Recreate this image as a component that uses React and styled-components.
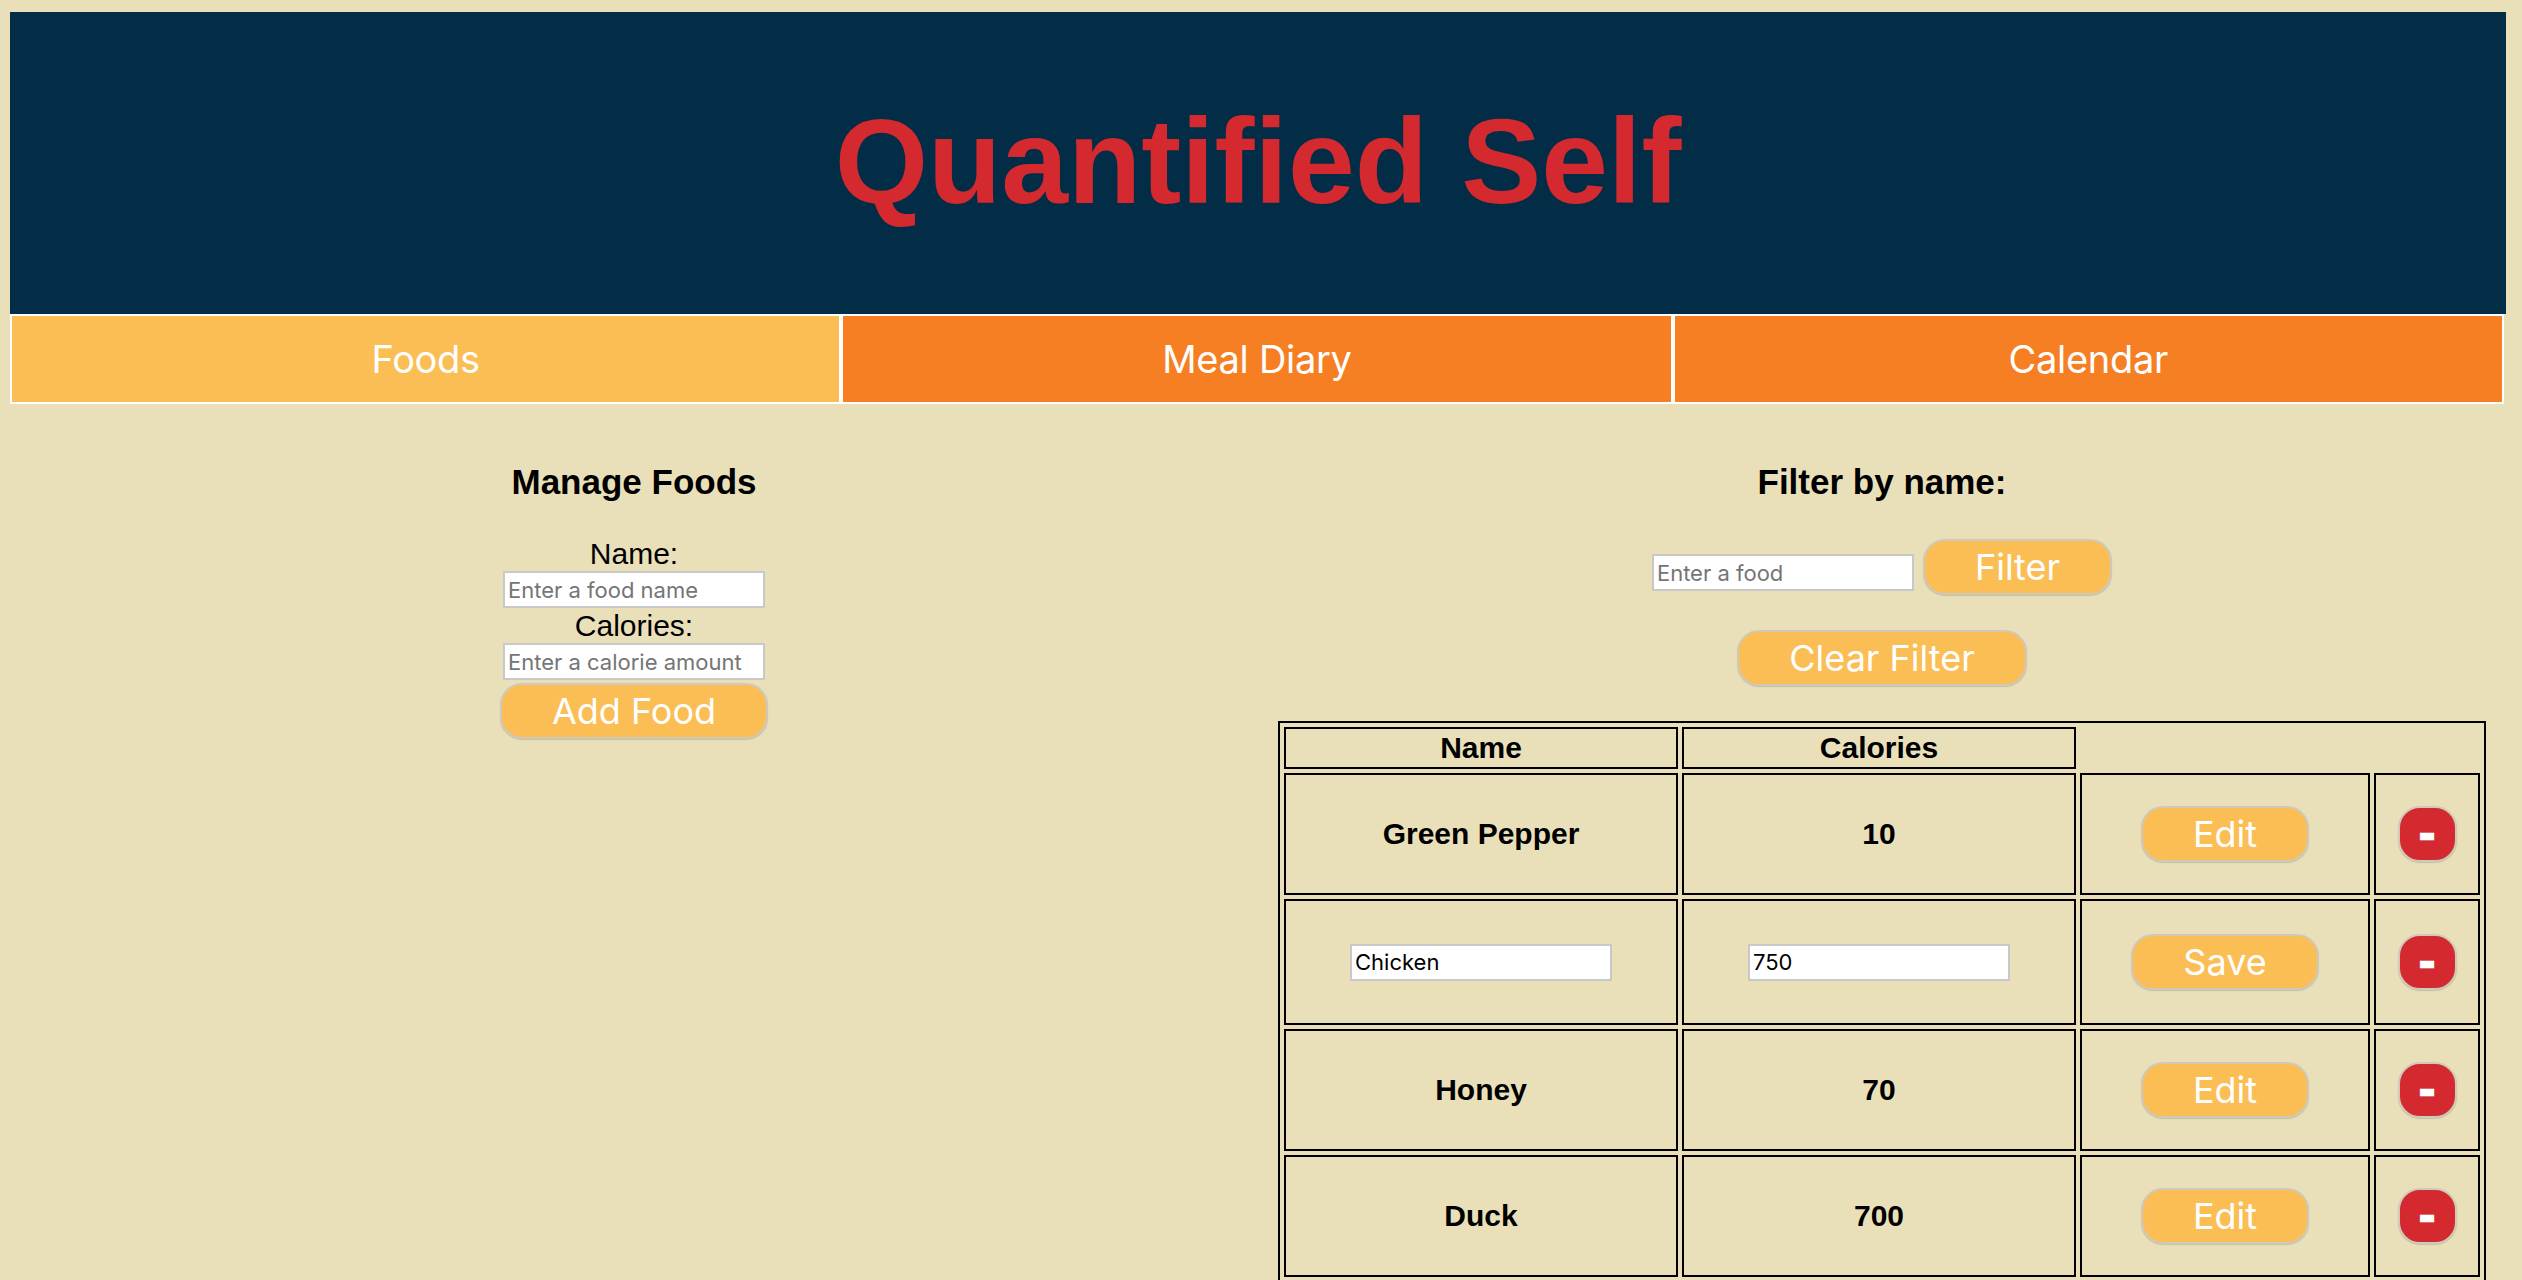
import React from "react";
import styled, { createGlobalStyle } from "styled-components";

const GlobalStyle = createGlobalStyle`
  html, body {
    margin: 0;
    padding: 0;
    background: #e9e0b9;
  }
  body {
    font-family: "Liberation Sans", Arial, sans-serif;
    font-size: 30px;
    color: #000;
  }
`;

const Page = styled.div`
  padding: 12px 16px 0 10px;
  min-height: 100vh;
  box-sizing: border-box;
`;

const Header = styled.header`
  height: 302px;
  box-sizing: border-box;
  padding-bottom: 4px;
  background: #032d47;
  display: flex;
  align-items: center;
  justify-content: center;
`;

const Title = styled.h1`
  margin: 0;
  font-family: "Liberation Sans", Arial, sans-serif;
  font-weight: bold;
  font-size: 120px;
  line-height: 1;
  color: #d3292f;
`;

const Nav = styled.nav`
  display: flex;
  width: calc(100% - 2px);
`;

const NavButton = styled.button`
  flex: 1;
  height: 90px;
  margin: 0;
  padding: 0;
  border: 2px solid #fff;
  background: ${(p) => (p.$active ? "#fbbe55" : "#f67f24")};
  color: #fff;
  font-family: Inter, "Noto Sans", sans-serif;
  font-size: 38px;
  letter-spacing: -0.3px;
  cursor: pointer;
`;

const Columns = styled.main`
  display: grid;
  grid-template-columns: 1fr 1fr;
`;

const Column = styled.section`
  display: flex;
  flex-direction: column;
  align-items: center;
  padding-top: 58px;
`;

const SectionTitle = styled.h3`
  margin: 0;
  font-size: 35px;
  font-weight: bold;
  line-height: 40px;
`;

const FoodForm = styled.form`
  display: flex;
  flex-direction: column;
  align-items: center;
  margin-top: 34px;
`;

const FieldLabel = styled.label`
  display: block;
  font-size: 30px;
  line-height: ${(p) => (p.$tight ? "34px" : "35px")};
  margin-top: ${(p) => (p.$tight ? "1px" : "0")};
`;

const TextInput = styled.input`
  width: 262px;
  height: 37px;
  box-sizing: border-box;
  border: 2px solid #c8c8c8;
  padding: 0 3px;
  margin: ${(p) => (p.$lift ? "0 0 4px 0" : "0")};
  background: #fff;
  color: #000;
  font-family: Inter, "Noto Sans", sans-serif;
  font-size: 22px;
  outline: none;
  &::placeholder {
    color: #757575;
  }
`;

const PillButton = styled.button`
  margin: ${(p) => p.$margin || "0"};
  padding: 4px 50px;
  border: 2px solid #cfc9bc;
  border-radius: 22px;
  background: #fbbe55;
  color: #fff;
  font-family: Inter, "Noto Sans", sans-serif;
  font-size: 36px;
  line-height: 44px;
  box-shadow: 0 1px 1px rgba(0, 0, 0, 0.15);
  cursor: pointer;
`;

const DeleteButton = styled(PillButton)`
  width: 59px;
  padding: 4px 0;
  background: #d3292f;
  font-weight: 900;
  font-size: 34px;
  -webkit-text-stroke: 2.5px #fff;
`;

const FilterRow = styled.div`
  display: flex;
  align-items: flex-end;
  gap: 9px;
  margin-top: 37px;
`;

const FoodTable = styled.table`
  margin-top: 35px;
  width: 1208px;
  table-layout: fixed;
  border: 2px solid #000;
  border-spacing: 4px;
  font-size: 30px;
  font-weight: bold;
`;

const Col = styled.col`
  width: ${(p) => p.$w}px;
`;

const HeadCell = styled.th`
  border: 2px solid #000;
  padding: 0;
  line-height: 38px;
  text-align: center;
`;

const Cell = styled.td`
  border: 2px solid #000;
  padding: 0;
  height: ${(p) => (p.$tall ? "122px" : "118px")};
  text-align: center;
  vertical-align: middle;
`;

const foods = [
  { name: "Green Pepper", calories: 10 },
  { name: "Chicken", calories: 750, editing: true },
  { name: "Honey", calories: 70 },
  { name: "Duck", calories: 700 },
];

export default function App() {
  return (
    <>
      <GlobalStyle />
      <Page>
        <Header>
          <Title>Quantified Self</Title>
        </Header>
        <Nav>
          <NavButton $active>Foods</NavButton>
          <NavButton>Meal Diary</NavButton>
          <NavButton>Calendar</NavButton>
        </Nav>
        <Columns>
          <Column>
            <SectionTitle>Manage Foods</SectionTitle>
            <FoodForm onSubmit={(e) => e.preventDefault()}>
              <FieldLabel htmlFor="food-name">Name:</FieldLabel>
              <TextInput id="food-name" placeholder="Enter a food name" />
              <FieldLabel $tight htmlFor="food-cal">
                Calories:
              </FieldLabel>
              <TextInput id="food-cal" placeholder="Enter a calorie amount" />
              <PillButton type="submit" $margin="3px 0 0 0">
                Add Food
              </PillButton>
            </FoodForm>
          </Column>
          <Column>
            <SectionTitle>Filter by name:</SectionTitle>
            <FilterRow>
              <TextInput $lift placeholder="Enter a food" />
              <PillButton>Filter</PillButton>
            </FilterRow>
            <PillButton $margin="35px 0 0 0">Clear Filter</PillButton>
            <FoodTable>
              <colgroup>
                <Col $w={394} />
                <Col $w={394} />
                <Col $w={290} />
                <Col $w={106} />
              </colgroup>
              <thead>
                <tr>
                  <HeadCell>Name</HeadCell>
                  <HeadCell>Calories</HeadCell>
                </tr>
              </thead>
              <tbody>
                {foods.map((f) => (
                  <tr key={f.name}>
                    <Cell $tall={f.editing}>
                      {f.editing ? <TextInput defaultValue={f.name} /> : f.name}
                    </Cell>
                    <Cell $tall={f.editing}>
                      {f.editing ? (
                        <TextInput defaultValue={String(f.calories)} />
                      ) : (
                        f.calories
                      )}
                    </Cell>
                    <Cell $tall={f.editing}>
                      <PillButton>{f.editing ? "Save" : "Edit"}</PillButton>
                    </Cell>
                    <Cell $tall={f.editing}>
                      <DeleteButton>-</DeleteButton>
                    </Cell>
                  </tr>
                ))}
              </tbody>
            </FoodTable>
          </Column>
        </Columns>
      </Page>
    </>
  );
}
